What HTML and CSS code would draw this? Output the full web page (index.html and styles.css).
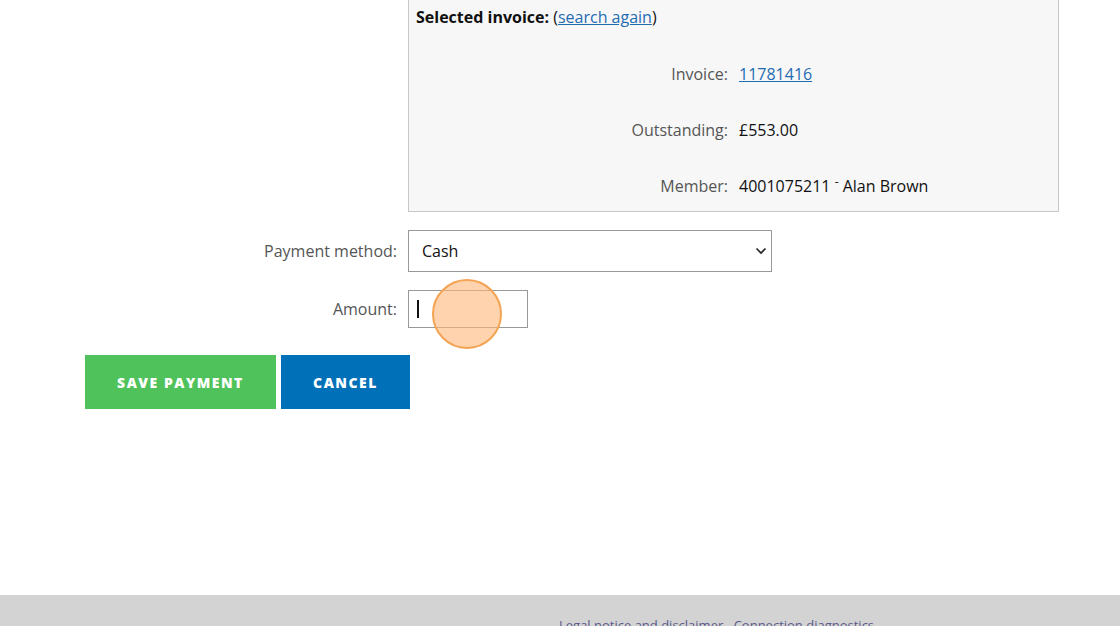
FILE: index.html
```html
<!DOCTYPE html>
<html lang="en">
  <head>
    <meta charset="UTF-8" />
    <meta name="viewport" content="width=device-width, initial-scale=1.0" />
    <title>Record payment</title>
    <link rel="stylesheet" href="styles.css">
  </head>
  <body>
    <div class="page">
      <form class="payment-form">
        <div class="form-row">
          <div class="form-label"></div>
          <div class="invoice-box">
            <p class="invoice-heading"><strong>Selected invoice:</strong> (<a href="#">search again</a>)</p>
            <div class="invoice-details">
              <div class="detail-label">Invoice:</div>
              <div class="detail-value"><a href="#">11781416</a></div>
              <div class="detail-label">Outstanding:</div>
              <div class="detail-value">£553.00</div>
              <div class="detail-label">Member:</div>
              <div class="detail-value">4001075211 <span class="dash">-</span> Alan Brown</div>
            </div>
          </div>
        </div>

        <div class="form-row">
          <label class="form-label" for="method">Payment method:</label>
          <span class="select-wrap">
            <select id="method" class="select">
              <option>Cash</option>
              <option>Card</option>
              <option>Cheque</option>
            </select>
            <svg class="chevron" width="12" height="8" viewBox="0 0 12 8">
              <path d="M1.5 1.5 L6 6 L10.5 1.5" fill="none" stroke="#222" stroke-width="1.6" />
            </svg>
          </span>
        </div>

        <div class="form-row">
          <label class="form-label" for="amount">Amount:</label>
          <span class="amount-wrap">
            <input id="amount" class="amount" type="text">
            <span class="caret"></span>
            <span class="click-mark"></span>
          </span>
        </div>

        <div class="actions">
          <button type="button" class="btn btn-save">Save payment</button>
          <button type="button" class="btn btn-cancel">Cancel</button>
        </div>
      </form>
    </div>

    <footer class="site-footer">
      <a href="#">Legal notice and disclaimer</a>
      <a href="#">Connection diagnostics</a>
    </footer>
  </body>
</html>
```

FILE: styles.css
```css
body {
  font-family: "Open Sans", "Liberation Sans", sans-serif;
  margin: 0;
  padding: 0;
  background-color: #ffffff;
  color: #111;
  font-size: 16px;
  line-height: 24px;
  overflow: hidden;
}

.page {
  margin-top: -6px;
  padding-bottom: 186px;
}

.payment-form {
  display: flex;
  flex-direction: column;
  gap: 18px;
}

.form-row {
  display: grid;
  grid-template-columns: 397px auto;
  column-gap: 11px;
  align-items: center;
  justify-content: start;
}

.form-label {
  text-align: right;
  color: #555;
}

.invoice-box {
  width: 635px;
  background-color: #f7f7f7;
  border: 1px solid #c8c8c8;
  padding: 10px 7px 11px;
}

.invoice-heading {
  margin: 0;
}

.invoice-heading strong {
  font-weight: 700;
}

a {
  color: #1f6cb3;
  text-decoration: underline;
}

.invoice-details {
  display: grid;
  grid-template-columns: 312px auto;
  column-gap: 11px;
  row-gap: 32px;
  margin-top: 33px;
}

.detail-label {
  text-align: right;
  color: #555;
}

.detail-value {
  color: #111;
}

.dash {
  font-size: 12px;
  position: relative;
  top: -6px;
}

.select-wrap,
.amount-wrap {
  position: relative;
  display: inline-block;
}

.select {
  appearance: none;
  -webkit-appearance: none;
  width: 364px;
  height: 42px;
  border: 1px solid #999;
  border-radius: 0;
  background: #fff;
  font-family: inherit;
  font-size: 16px;
  color: #111;
  padding: 0 13px;
  display: block;
}

.chevron {
  position: absolute;
  right: 5px;
  top: 17px;
  pointer-events: none;
}

.amount {
  width: 120px;
  height: 38px;
  box-sizing: border-box;
  border: 1px solid #999;
  border-radius: 0;
  font-family: inherit;
  font-size: 16px;
  padding: 0 8px;
  display: block;
}

.caret {
  position: absolute;
  left: 9px;
  top: 10px;
  width: 2px;
  height: 18px;
  background: #111;
}

.click-mark {
  position: absolute;
  left: 24px;
  top: -11px;
  width: 66px;
  height: 66px;
  border-radius: 50%;
  border: 2px solid #f3a352;
  background: rgba(253, 182, 120, 0.6);
  pointer-events: none;
}

.actions {
  display: flex;
  gap: 5px;
  margin-left: 85px;
  margin-top: 9px;
}

.btn {
  border: none;
  color: #fff;
  font-family: inherit;
  font-size: 14px;
  font-weight: 800;
  letter-spacing: 1.5px;
  text-transform: uppercase;
  height: 54px;
  cursor: pointer;
}

.btn-save {
  width: 191px;
  background-color: #4fc25b;
}

.btn-cancel {
  width: 129px;
  background-color: #0070b9;
}

.site-footer {
  background-color: #d3d3d3;
  height: 60px;
  padding: 18px 0 0 559px;
  font-size: 13px;
}

.site-footer a {
  color: #5a5a8c;
  text-decoration: none;
  margin-right: 7px;
}
```
